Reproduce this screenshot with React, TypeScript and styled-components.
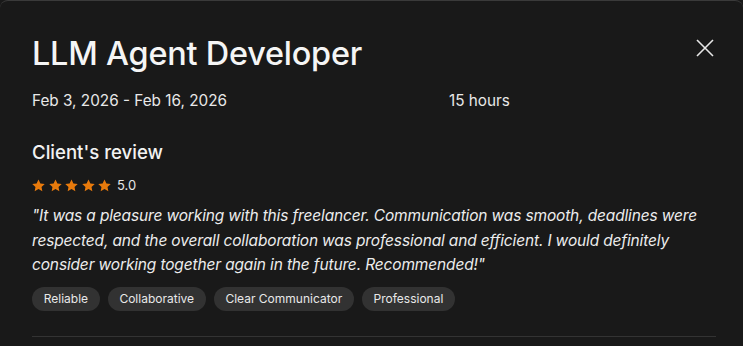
import React from "react";
import styled, { createGlobalStyle } from "styled-components";

const Global = createGlobalStyle`
  html, body { margin: 0; padding: 0; background: #191919; }
  body { font-family: Inter, "Noto Sans", sans-serif; color: #f2f2f2; }
`;

const Panel = styled.div`
  box-sizing: border-box;
  width: 743px;
  height: 346px;
  background: #191919;
  border-top: 1px solid #3a3a3a;
  border-radius: 8px 8px 0 0;
  padding: 33px 27px 0 32px;
  overflow: hidden;
  display: flex;
  flex-direction: column;
`;

const Header = styled.div`
  display: flex;
  justify-content: space-between;
  align-items: flex-start;
`;

const Title = styled.h1`
  margin: 0;
  font-size: 32.4px;
  font-weight: 500;
  line-height: 40px;
  letter-spacing: -0.2px;
  color: #f5f5f5;
`;

const CloseButton = styled.button`
  background: none;
  border: none;
  padding: 0;
  margin: 2px -1px 0 0;
  width: 24px;
  height: 24px;
  color: #e6e6e6;
  display: flex;
  align-items: center;
  justify-content: center;
`;

const Meta = styled.div`
  display: grid;
  grid-template-columns: 417px 1fr;
  margin-top: 17px;
  font-size: 15.3px;
  line-height: 20px;
  color: #e8e8e8;
`;

const SectionTitle = styled.h2`
  margin: 29px 0 0 0;
  font-size: 18.6px;
  font-weight: 500;
  line-height: 24px;
  color: #f2f2f2;
`;

const RatingRow = styled.div`
  display: flex;
  align-items: center;
  gap: 6px;
  margin-top: 13px;
`;

const Stars = styled.div`
  display: flex;
  gap: 3.5px;
`;

const Score = styled.span`
  font-size: 13px;
  line-height: 16px;
  color: #e6e6e6;
`;

const Quote = styled.p`
  margin: 11px 0 0 0;
  font-size: 15.5px;
  font-style: italic;
  line-height: 24.5px;
  color: #ececec;
  letter-spacing: -0.15px;
`;

const Tags = styled.div`
  display: flex;
  gap: 8px;
  margin-top: 9px;
`;

const Tag = styled.span`
  background: #323232;
  border-radius: 999px;
  padding: 0 11.7px;
  height: 24px;
  display: flex;
  align-items: center;
  font-size: 12px;
  color: #e8e8e8;
`;

const Divider = styled.hr`
  margin: 25px 0 0 0;
  border: none;
  border-top: 1px solid #333;
`;

const Star = () => (
  <svg width="13" height="13" viewBox="0 0 24 24" fill="#e87a0c">
    <path d="M12 0.8l3.5 7.3 8 1-5.9 5.5 1.5 7.9L12 18.6l-7.1 3.9 1.5-7.9L0.5 9.1l8-1z" />
  </svg>
);

export default function App() {
  const tags = ["Reliable", "Collaborative", "Clear Communicator", "Professional"];
  return (
    <>
      <Global />
      <Panel>
        <Header>
          <Title>LLM Agent Developer</Title>
          <CloseButton aria-label="Close">
            <svg width="20" height="20" viewBox="0 0 20 20" stroke="currentColor" strokeWidth="1.6" fill="none">
              <path d="M2 2L18 18M18 2L2 18" />
            </svg>
          </CloseButton>
        </Header>
        <Meta>
          <span>Feb 3, 2026 - Feb 16, 2026</span>
          <span>15 hours</span>
        </Meta>
        <SectionTitle>Client's review</SectionTitle>
        <RatingRow>
          <Stars>
            {[0, 1, 2, 3, 4].map((i) => (
              <Star key={i} />
            ))}
          </Stars>
          <Score>5.0</Score>
        </RatingRow>
        <Quote>
          "It was a pleasure working with this freelancer. Communication was smooth, deadlines were respected, and the overall collaboration was professional and efficient. I would definitely consider working together again in the future. Recommended!"
        </Quote>
        <Tags>
          {tags.map((t) => (
            <Tag key={t}>{t}</Tag>
          ))}
        </Tags>
        <Divider />
      </Panel>
    </>
  );
}
